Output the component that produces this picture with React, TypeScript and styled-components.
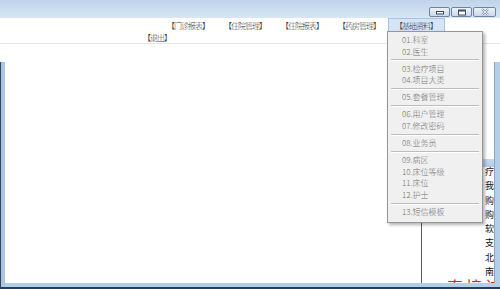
import React from "react"

import styled, { createGlobalStyle } from 'styled-components';

const GlobalStyle = createGlobalStyle`
  html, body {
    margin: 0;
    padding: 0;
    background: #ffffff;
  }
  body {
    font-family: "Noto Sans CJK SC", "Noto Sans", sans-serif;
  }
`

const topMenus = ['【门诊报表】', '【住院管理】', '【住院报表】', '【药房管理】', '【基础资料】'];

// null = separator
const basicItems: (string | null)[] = [
  '01.科室', '02.医生', null,
  '03.检疗项目', '04.项目大类', null,
  '05.套餐管理', null,
  '06.用户管理', '07.修改密码', null,
  '08.业务员', null,
  '09.病区', '10.床位等级', '11.床位', '12.护士', null,
  '13.短信模板',
];

const sideLines = ['疗', '我', '购', '购', '软', '支', '北', '南'];

export default function App() {
  return (
    <Window>
      <GlobalStyle />
      <TitleBar>
        <WinButton aria-label="minimize">
          <svg width="10" height="6" viewBox="0 0 10 6">
            <rect x="1.5" y="2.5" width="7" height="2.5" fill="#fff" stroke="#3d4f66" strokeWidth="1" />
          </svg>
        </WinButton>
        <WinButton aria-label="maximize">
          <svg width="10" height="7" viewBox="0 0 10 7">
            <rect x="1.5" y="1" width="7" height="5" fill="#fff" stroke="#3d4f66" strokeWidth="1" />
            <rect x="1.5" y="1" width="7" height="1.5" fill="#3d4f66" />
          </svg>
        </WinButton>
        <WinButton $wide aria-label="close">
          <svg width="10" height="8" viewBox="0 0 10 8">
            <path d="M2 1 L8 7 M8 1 L2 7" stroke="#8c98a8" strokeWidth="2.2" />
            <path d="M2 1 L8 7 M8 1 L2 7" stroke="#f2f5f9" strokeWidth="0.9" />
          </svg>
        </WinButton>
      </TitleBar>

      <MenuBar>
        <MenuRow>
          {topMenus.map((m, i) => (
            <MenuItem key={m} $active={i === topMenus.length - 1}>{m}</MenuItem>
          ))}
        </MenuRow>
        <MenuRow $second>
          <MenuItem>【退出】</MenuItem>
        </MenuRow>
      </MenuBar>

      <Workspace>
        <ChildWindow>
          <MainPane />
          <SidePanel>
            <SideHeader />
            <SideText>
              {sideLines.map((t, i) => <SideLine key={i}>{t}</SideLine>)}
              <RedLine>直接访</RedLine>
            </SideText>
          </SidePanel>
        </ChildWindow>
      </Workspace>

      <Dropdown>
        {basicItems.map((it, i) =>
          it === null ? <Separator key={i} /> : <DropItem key={i}>{it}</DropItem>
        )}
      </Dropdown>
    </Window>
  );
}

const Window = styled.div`
  position: relative;
  width: 500px;
  height: 289px;
  display: flex;
  flex-direction: column;
  overflow: hidden;
  background: #ffffff;
`

const TitleBar = styled.div`
  height: 18px;
  flex: none;
  display: flex;
  justify-content: flex-end;
  align-items: flex-start;
  gap: 1px;
  padding: 7px 4px 0 0;
  box-sizing: border-box;
  background: linear-gradient(#bfd3ea, #d8e6f5);
`

const WinButton = styled.div<{ $wide?: boolean }>`
  width: ${p => (p.$wide ? 23 : 21)}px;
  height: 10px;
  box-sizing: border-box;
  border: 1px solid #71849c;
  border-radius: 2px;
  background: linear-gradient(#eef3f9, #c9d8ea);
  display: flex;
  align-items: center;
  justify-content: center;
`

const MenuBar = styled.div`
  flex: none;
  height: 26px;
  background: #ffffff;
  border-bottom: 1px solid #e6e6e6;
  box-sizing: border-box;
  display: flex;
  flex-direction: column;
`

const MenuRow = styled.div<{ $second?: boolean }>`
  display: flex;
  justify-content: ${p => (p.$second ? 'flex-start' : 'flex-end')};
  padding: ${p => (p.$second ? '0 0 0 135.5px' : '0 55.5px 0 0')};
  height: ${p => (p.$second ? 12 : 13)}px;
  align-items: center;
`

const MenuItem = styled.div<{ $active?: boolean }>`
  height: 100%;
  display: flex;
  align-items: center;
  padding: 0 6.5px;
  box-sizing: border-box;
  font-size: 8px;
  font-weight: 300;
  letter-spacing: -1px;
  color: #3a3a3a;
  white-space: nowrap;
  background: ${p => (p.$active ? '#d3e5f7' : 'transparent')};
  border: 1px solid ${p => (p.$active ? '#a6c3e4' : 'transparent')};
  border-bottom: none;
`

const Workspace = styled.div`
  flex: 1;
  display: flex;
  flex-direction: column;
  padding-top: 18px;
  min-height: 0;
`

const ChildWindow = styled.div`
  flex: 1;
  display: flex;
  min-height: 0;
  border-left: 1px solid #34465c;
  border-bottom: 2px solid #21405e;
  box-shadow: inset 4px 0 0 #a9c6e4, inset -5px 0 0 #b3cee9, inset 0 -4px 0 #b3cee9;
  padding: 0 5px 4px 4px;
`

const MainPane = styled.div`
  width: 416px;
  flex: none;
  background: #ffffff;
  border-right: 1px solid #5b5b5b;
`

const SidePanel = styled.div`
  flex: 1;
  display: flex;
  flex-direction: column;
  overflow: hidden;
  border-right: 1px solid #8fa6bf;
  padding-top: 97px;
`

const SideHeader = styled.div`
  flex: none;
  height: 8px;
  background: linear-gradient(#c3d8ee, #b2cbe6);
`

const SideText = styled.div`
  flex: 1;
  overflow: hidden;
  margin-top: -2px;
  padding-left: 63px;
  font-size: 9px;
  line-height: 14.3px;
  color: #111111;
`

const SideLine = styled.div`
  white-space: nowrap;
`

const RedLine = styled.div`
  margin-left: -38px;
  font-size: 16px;
  line-height: 14px;
  color: #e0201c;
  white-space: nowrap;
  letter-spacing: 3px;
`

const Dropdown = styled.div`
  position: absolute;
  left: 387px;
  top: 31px;
  width: 96px;
  box-sizing: border-box;
  padding: 2px 2px 4px;
  background: #f0f0f0;
  border: 1px solid #979797;
  box-shadow: 2px 2px 3px rgba(0, 0, 0, 0.3);
`

const DropItem = styled.div`
  height: 11.6px;
  line-height: 11.6px;
  padding-left: 12px;
  font-size: 8px;
  font-weight: 300;
  color: #707070;
  white-space: nowrap;
`

const Separator = styled.div`
  height: 0;
  margin: 2px 1px 1.5px;
  border-top: 1px solid #bdbdbd;
  border-bottom: 1px solid #ffffff;
`
